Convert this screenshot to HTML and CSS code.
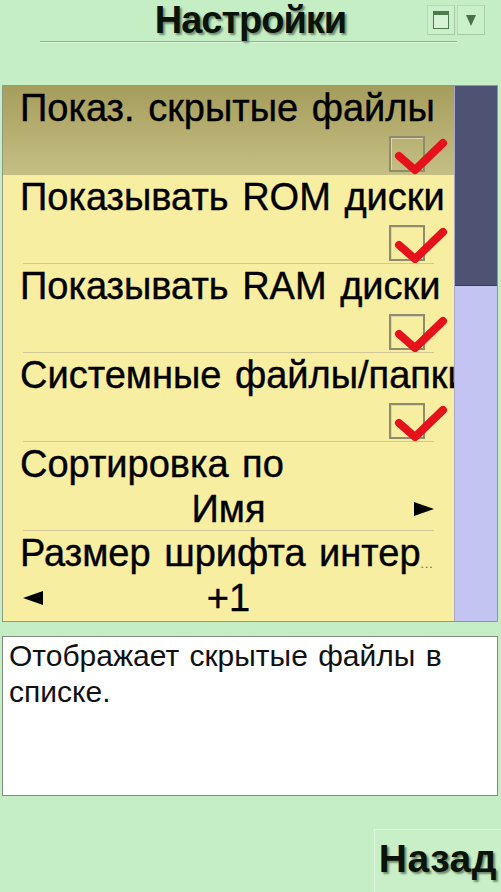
FILE: index.html
```html
<!DOCTYPE html>
<html lang="ru">
<head>
<meta charset="utf-8">
<title>Настройки</title>
<link rel="stylesheet" href="styles.css">
</head>
<body>
<div class="screen">
  <div class="header">
    <div class="title">Настройки</div>
    <div class="winctl">
      <div class="ctl ctl-min"><span class="minbox"></span></div>
      <div class="ctl ctl-menu"><span class="tri-down"></span></div>
    </div>
  </div>
  <div class="rule"></div>

  <div class="list">
    <div class="rows">
      <div class="row selected">
        <div class="label">Показ. скрытые файлы</div>
        <div class="value value-check"><span class="cb"><svg class="tick" viewBox="0 0 56 36" width="56" height="36"><path d="M8 18 L24 32 L52 5" /></svg></span></div>
      </div>
      <div class="row">
        <div class="label">Показывать ROM диски</div>
        <div class="value value-check"><span class="cb"><svg class="tick" viewBox="0 0 56 36" width="56" height="36"><path d="M8 18 L24 32 L52 5" /></svg></span></div>
      </div>
      <div class="row">
        <div class="label">Показывать RAM диски</div>
        <div class="value value-check"><span class="cb"><svg class="tick" viewBox="0 0 56 36" width="56" height="36"><path d="M8 18 L24 32 L52 5" /></svg></span></div>
      </div>
      <div class="row">
        <div class="label">Системные файлы/папки</div>
        <div class="value value-check"><span class="cb"><svg class="tick" viewBox="0 0 56 36" width="56" height="36"><path d="M8 18 L24 32 L52 5" /></svg></span></div>
      </div>
      <div class="row">
        <div class="label">Сортировка по</div>
        <div class="value value-choice"><span class="arr arr-l hidden"></span><span class="choice">Имя</span><span class="arr arr-r"></span></div>
      </div>
      <div class="row last">
        <div class="label"><span class="lbl-text">Размер шрифта интер</span><span class="dots">...</span></div>
        <div class="value value-choice"><span class="arr arr-l"></span><span class="choice">+1</span><span class="arr arr-r hidden"></span></div>
      </div>
    </div>
    <div class="scrollbar"><div class="thumb"></div></div>
  </div>

  <div class="desc">Отображает скрытые файлы в списке.</div>

  <div class="footer">
    <div class="back">Назад</div>
  </div>
</div>
</body>
</html>
```
FILE: styles.css
```css
html, body {
  margin: 0;
  padding: 0;
}
body {
  background: #c5eec5;
  font-family: "Liberation Sans", Arial, sans-serif;
  color: #000;
}
.screen {
  width: 501px;
  height: 892px;
  display: flex;
  flex-direction: column;
  overflow: hidden;
}
.header {
  position: relative;
  height: 41px;
}
.title {
  text-align: center;
  font-size: 38px;
  font-weight: bold;
  letter-spacing: -1px;
  line-height: 40px;
  color: #0a140a;
  text-shadow: 2px 2px 2px #6d8a6d;
}
.winctl {
  position: absolute;
  top: 5px;
  left: 427px;
  display: flex;
  gap: 2px;
}
.ctl {
  width: 28px;
  height: 30px;
  border: 1px solid #b4dcb4;
  border-right-color: #a6cba6;
  border-bottom-color: #a6cba6;
  box-sizing: border-box;
  display: flex;
  align-items: center;
  justify-content: center;
  background: #c9f0c9;
}
.minbox {
  width: 14px;
  height: 13px;
  border: 1px solid #4d7a4d;
  border-top: 4px solid #4d7a4d;
  background: #d6f3d6;
}
.tri-down {
  width: 0;
  height: 0;
  border-left: 5px solid transparent;
  border-right: 5px solid transparent;
  border-top: 11px solid #4a6e4a;
}
.rule {
  margin-left: 40px;
  width: 417px;
  height: 1px;
  background: #94b094;
  border-bottom: 1px solid #d8f6d8;
}

.list {
  margin-top: 42px;
  margin-left: 2px;
  width: 496px;
  height: 537px;
  box-sizing: border-box;
  border: 1px solid #8f9a86;
  display: flex;
  background: #f8eea2;
}
.rows {
  flex: 1;
  display: flex;
  flex-direction: column;
  min-width: 0;
}
.row {
  height: 89px;
  box-sizing: border-box;
  display: flex;
  flex-direction: column;
  position: relative;
  background: #f8eea2;
}
.row::after {
  content: "";
  position: absolute;
  left: 20px;
  right: 20px;
  bottom: 0;
  height: 1px;
  background: #cfc794;
}
.row.selected {
  background: linear-gradient(#a59d5c, #c6bf84);
}
.row.selected::after,
.row.last::after {
  display: none;
}
.label {
  height: 44px;
  padding-left: 17px;
  font-size: 38px;
  line-height: 44px;
  white-space: nowrap;
  overflow: hidden;
  display: flex;
  word-spacing: 3px;
  -webkit-text-stroke: 0.4px #000;
}
.dots {
  font-size: 12px;
  color: #555;
  letter-spacing: 1px;
  align-self: flex-end;
  line-height: 22px;
  -webkit-text-stroke: 0;
}
.value {
  height: 45px;
  display: flex;
  align-items: center;
}
.value-check {
  justify-content: flex-end;
  padding-right: 29px;
}
.cb {
  position: relative;
  width: 36px;
  height: 36px;
  box-sizing: border-box;
  border: 2px solid #8e8c6c;
  box-shadow: inset 1px 1px 0 #dcd6a8;
  margin-top: 2px;
}
.tick {
  position: absolute;
  left: 0;
  top: 0;
  overflow: visible;
}
.tick path {
  fill: none;
  stroke: #e5121c;
  stroke-width: 8;
  stroke-linejoin: round;
  stroke-linecap: round;
}
.value-choice {
  padding: 0 20px;
  justify-content: space-between;
  font-size: 38px;
  line-height: 44px;
  -webkit-text-stroke: 0.4px #000;
}
.choice {
  flex: 1;
  text-align: center;
}
.arr {
  width: 0;
  height: 0;
  border-top: 7px solid transparent;
  border-bottom: 7px solid transparent;
}
.arr-r {
  border-left: 20px solid #000;
}
.arr-l {
  border-right: 20px solid #000;
}
.hidden {
  visibility: hidden;
}
.scrollbar {
  width: 42px;
  background: #c4c4f3;
  border-left: 1px solid #a8a8cc;
  display: flex;
  flex-direction: column;
}
.thumb {
  height: 199px;
  background: #4e5273;
  border-bottom: 1px solid #3a3d58;
}

.desc {
  margin-top: 14px;
  margin-left: 2px;
  width: 496px;
  height: 160px;
  box-sizing: border-box;
  border: 1px solid #7f8c7f;
  background: #fff;
  padding: 1px 6px;
  font-size: 30px;
  line-height: 36px;
  color: #111;
  word-spacing: 2px;
}

.footer {
  flex: 1;
  display: flex;
  justify-content: flex-end;
  align-items: flex-end;
}
.back {
  width: 127px;
  height: 63px;
  box-sizing: border-box;
  border-top: 1px solid #e0f7e0;
  border-left: 1px solid #e0f7e0;
  background: #c8efc8;
  font-size: 39px;
  font-weight: bold;
  letter-spacing: 0.5px;
  line-height: 58px;
  text-align: right;
  padding-right: 4px;
  color: #0a140a;
  text-shadow: 2px 2px 2px #6d8a6d;
}
```
